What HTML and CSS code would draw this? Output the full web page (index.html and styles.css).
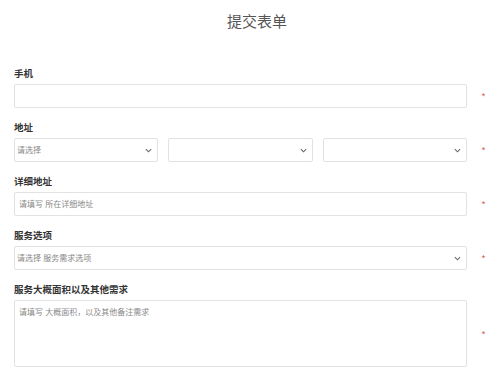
FILE: index.html
```html
<!DOCTYPE html>
<html lang="zh-CN">

<head>
    <meta charset="UTF-8">
    <meta name="viewport" content="width=device-width, initial-scale=1.0">
    <title>提交表单</title>
    <link rel="stylesheet" href="styles.css">
</head>

<body>
    <div class="page">
        <h1 class="title">提交表单</h1>

        <form class="form">
            <!-- 手机 -->
            <div class="group">
                <label class="label">手机</label>
                <div class="row">
                    <div class="control"><input class="field" type="text"></div>
                    <span class="req">*</span>
                </div>
            </div>

            <!-- 地址 -->
            <div class="group">
                <label class="label">地址</label>
                <div class="row">
                    <div class="control selects">
                        <div class="select">
                            <select class="field">
                                <option>请选择</option>
                            </select>
                            <svg class="arrow" viewBox="0 0 8 5"><path d="M1 1l3 3 3-3" /></svg>
                        </div>
                        <div class="select">
                            <select class="field">
                                <option></option>
                            </select>
                            <svg class="arrow" viewBox="0 0 8 5"><path d="M1 1l3 3 3-3" /></svg>
                        </div>
                        <div class="select">
                            <select class="field">
                                <option></option>
                            </select>
                            <svg class="arrow" viewBox="0 0 8 5"><path d="M1 1l3 3 3-3" /></svg>
                        </div>
                    </div>
                    <span class="req">*</span>
                </div>
            </div>

            <!-- 详细地址 -->
            <div class="group">
                <label class="label">详细地址</label>
                <div class="row">
                    <div class="control"><input class="field" type="text" placeholder="请填写 所在详细地址"></div>
                    <span class="req">*</span>
                </div>
            </div>

            <!-- 服务选项 -->
            <div class="group">
                <label class="label">服务选项</label>
                <div class="row">
                    <div class="control">
                        <div class="select">
                            <select class="field">
                                <option>请选择 服务需求选项</option>
                            </select>
                            <svg class="arrow" viewBox="0 0 8 5"><path d="M1 1l3 3 3-3" /></svg>
                        </div>
                    </div>
                    <span class="req">*</span>
                </div>
            </div>

            <!-- 其他需求 -->
            <div class="group">
                <label class="label">服务大概面积以及其他需求</label>
                <div class="row">
                    <div class="control"><textarea class="field area" placeholder="请填写 大概面积，以及其他备注需求"></textarea></div>
                    <span class="req">*</span>
                </div>
            </div>
        </form>
    </div>
</body>

</html>
```

FILE: styles.css
```css
body {
    margin: 0;
    font-family: "Liberation Sans", "Noto Sans CJK SC", sans-serif;
    background: #fff;
    color: #333;
}

.page {
    padding-left: 14px;
}

.title {
    margin: 0 0 35px;
    padding-top: 12px;
    font-size: 15px;
    line-height: 20px;
    font-weight: normal;
    text-align: center;
    color: #555;
}

.group {
    margin-bottom: 13px;
}

.label {
    display: block;
    font-size: 9.5px;
    line-height: 14px;
    font-weight: bold;
    color: #333;
    margin-bottom: 3px;
}

.row {
    display: flex;
    align-items: center;
}

.control {
    flex: 0 0 453px;
}

.selects {
    display: flex;
    gap: 10px;
}

.selects .select {
    flex: 1;
}

.select {
    position: relative;
}

.field {
    display: block;
    width: 100%;
    height: 24px;
    box-sizing: border-box;
    border: 1px solid #e2e2e2;
    border-radius: 2px;
    padding: 0 4px;
    font-family: inherit;
    font-size: 8px;
    color: #888;
    background: #fff;
    outline: none;
}

select.field {
    appearance: none;
    -webkit-appearance: none;
    padding-left: 2px;
}

.field::placeholder {
    color: #888;
}

.area {
    height: 67px;
    padding: 5px 4px;
    resize: none;
}

.arrow {
    position: absolute;
    right: 6px;
    top: 10px;
    width: 7px;
    height: 5px;
    fill: none;
    stroke: #666;
    stroke-width: 1.2;
}

.req {
    flex: 0 0 33px;
    text-align: center;
    font-size: 9px;
    color: #d9534f;
}
```
